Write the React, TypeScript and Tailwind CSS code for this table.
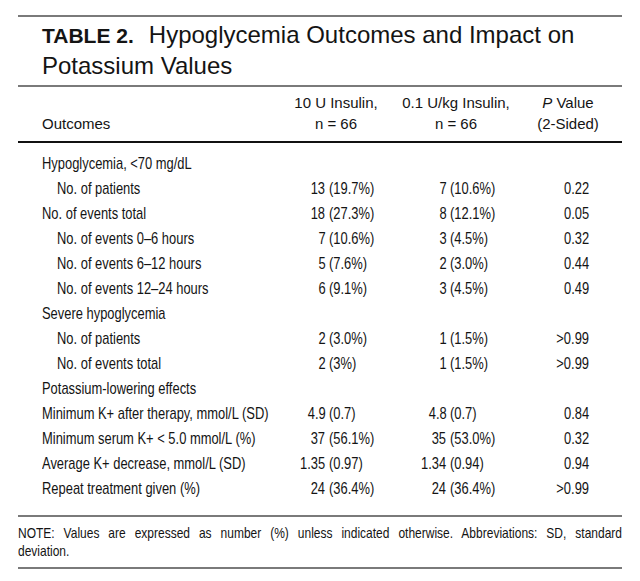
type Row = {
  label: string;
  indent?: boolean;
  values?: [string, string, string, string, string];
};

const rows: Row[] = [
  { label: 'Hypoglycemia, <70 mg/dL' },
  { label: 'No. of patients', indent: true, values: ['13', '(19.7%)', '7', '(10.6%)', '0.22'] },
  { label: 'No. of events total', values: ['18', '(27.3%)', '8', '(12.1%)', '0.05'] },
  { label: 'No. of events 0–6 hours', indent: true, values: ['7', '(10.6%)', '3', '(4.5%)', '0.32'] },
  { label: 'No. of events 6–12 hours', indent: true, values: ['5', '(7.6%)', '2', '(3.0%)', '0.44'] },
  { label: 'No. of events 12–24 hours', indent: true, values: ['6', '(9.1%)', '3', '(4.5%)', '0.49'] },
  { label: 'Severe hypoglycemia' },
  { label: 'No. of patients', indent: true, values: ['2', '(3.0%)', '1', '(1.5%)', '>0.99'] },
  { label: 'No. of events total', indent: true, values: ['2', '(3%)', '1', '(1.5%)', '>0.99'] },
  { label: 'Potassium-lowering effects' },
  { label: 'Minimum K+ after therapy, mmol/L (SD)', values: ['4.9', '(0.7)', '4.8', '(0.7)', '0.84'] },
  { label: 'Minimum serum K+ < 5.0 mmol/L (%)', values: ['37', '(56.1%)', '35', '(53.0%)', '0.32'] },
  { label: 'Average K+ decrease, mmol/L (SD)', values: ['1.35', '(0.97)', '1.34', '(0.94)', '0.94'] },
  { label: 'Repeat treatment given (%)', values: ['24', '(36.4%)', '24', '(36.4%)', '>0.99'] },
];

// condensed text: Helvetica Condensed isn't installed, so squeeze Liberation Sans
function Left({ children }: { children: React.ReactNode }) {
  return <span className="inline-block whitespace-nowrap origin-left scale-x-[0.76]">{children}</span>;
}

function Right({ children }: { children: React.ReactNode }) {
  return <span className="inline-block whitespace-nowrap origin-right scale-x-[0.76]">{children}</span>;
}

export default function App() {
  return (
    <div
      className="w-[640px] h-[581px] bg-white text-[#141414] pt-[15px] pl-[18px] overflow-hidden"
      style={{ fontFamily: '"Liberation Sans", Arial, sans-serif' }}
    >
      <div className="w-[604px]">
        <div className="h-[2px] bg-[#7a7a7a]" />

        {/* title */}
        <div className="pl-[24px] mt-[3px] mb-[4px] text-[24px] leading-[30px]">
          <span className="font-bold text-[21px] mr-[15px]">TABLE 2.</span>
          <span>Hypoglycemia Outcomes and Impact on Potassium Values</span>
        </div>

        <div className="h-[2px] bg-[#7a7a7a]" />

        {/* column headers */}
        <div className="flex items-end pl-[24px] mt-[5px] text-[15px] leading-[21px]">
          <div className="w-[248px] shrink-0">Outcomes</div>
          <div className="w-[92px] shrink-0 text-center">
            <div>10 U Insulin,</div>
            <div>n = 66</div>
          </div>
          <div className="w-[112px] shrink-0 ml-[18px] text-center">
            <div>0.1 U/kg Insulin,</div>
            <div>n = 66</div>
          </div>
          <div className="w-[64px] shrink-0 ml-[24px] text-center">
            <div>
              <span className="italic">P</span> Value
            </div>
            <div>(2-Sided)</div>
          </div>
        </div>

        <div className="h-[2px] bg-[#111] mt-[7px]" />

        {/* body */}
        <div className="pl-[24px] mt-[8px] mb-[14px] text-[17px] leading-[25px]">
          {rows.map((r, i) => (
            <div key={i} className="flex">
              <div className={`w-[248px] shrink-0 ${r.indent ? 'pl-[15px]' : ''}`}>
                <Left>{r.label}</Left>
              </div>
              {r.values && (
                <>
                  <div className="w-[39px] shrink-0 flex justify-end">
                    <Right>{r.values[0]}&nbsp;</Right>
                  </div>
                  <div className="w-[86px] shrink-0">
                    <Left>{r.values[1]}</Left>
                  </div>
                  <div className="w-[35px] shrink-0 flex justify-end">
                    <Right>{r.values[2]}&nbsp;</Right>
                  </div>
                  <div className="w-[90px] shrink-0">
                    <Left>{r.values[3]}</Left>
                  </div>
                  <div className="w-[49px] shrink-0 flex justify-end">
                    <Right>{r.values[4]}</Right>
                  </div>
                </>
              )}
            </div>
          ))}
        </div>

        <div className="h-[2px] bg-[#7a7a7a]" />

        {/* note */}
        <div className="mt-[7px] mb-[7px] text-[15px] leading-[18px]">
          <div className="w-[755px] origin-left scale-x-[0.8] text-justify [text-align-last:justify]">
            NOTE: Values are expressed as number (%) unless indicated otherwise. Abbreviations: SD, standard
          </div>
          <div>
            <span className="inline-block whitespace-nowrap origin-left scale-x-[0.8]">deviation.</span>
          </div>
        </div>

        <div className="h-[2px] bg-[#7a7a7a]" />
      </div>
    </div>
  );
}
